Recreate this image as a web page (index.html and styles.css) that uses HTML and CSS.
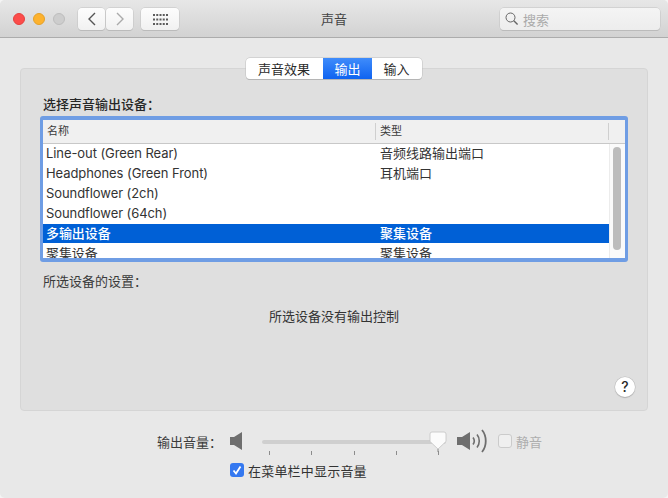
FILE: index.html
```html
<!DOCTYPE html>
<html lang="zh">
<head>
<meta charset="utf-8">
<title>声音</title>
<link rel="stylesheet" href="styles.css">
</head>
<body>
<div class="window">
  <header class="titlebar">
    <div class="tb-left">
      <div class="lights">
        <span class="light red"></span>
        <span class="light yellow"></span>
        <span class="light grey"></span>
      </div>
      <div class="nav">
        <button class="tb-btn nav-btn">
          <svg width="10" height="16" viewBox="0 0 10 16"><path d="M8 2 2 8l6 6" fill="none" stroke="#555" stroke-width="1.4"/></svg>
        </button>
        <button class="tb-btn nav-btn">
          <svg width="10" height="16" viewBox="0 0 10 16"><path d="M2 2 8 8l-6 6" fill="none" stroke="#aaa" stroke-width="1.4"/></svg>
        </button>
      </div>
      <button class="tb-btn grid-btn">
        <svg width="15" height="11" viewBox="0 0 15 11" fill="#5c5c5c">
          <rect x="0" y="0" width="2" height="2"/><rect x="3.25" y="0" width="2" height="2"/><rect x="6.5" y="0" width="2" height="2"/><rect x="9.75" y="0" width="2" height="2"/><rect x="13" y="0" width="2" height="2"/>
          <rect x="0" y="4.5" width="2" height="2"/><rect x="3.25" y="4.5" width="2" height="2"/><rect x="6.5" y="4.5" width="2" height="2"/><rect x="9.75" y="4.5" width="2" height="2"/><rect x="13" y="4.5" width="2" height="2"/>
          <rect x="0" y="9" width="2" height="2"/><rect x="3.25" y="9" width="2" height="2"/><rect x="6.5" y="9" width="2" height="2"/><rect x="9.75" y="9" width="2" height="2"/><rect x="13" y="9" width="2" height="2"/>
        </svg>
      </button>
    </div>
    <div class="title">声音</div>
    <div class="tb-right">
      <div class="search">
        <svg width="14" height="14" viewBox="0 0 14 14"><circle cx="5.5" cy="5.5" r="4.5" fill="none" stroke="#666" stroke-width="1"/><path d="M8.8 8.8 12.6 12.6" stroke="#666" stroke-width="1.4"/></svg>
        <span>搜索</span>
      </div>
    </div>
  </header>

  <main class="content">
    <div class="tabs">
      <div class="tab tab-a">声音效果</div>
      <div class="tab tab-b active">输出</div>
      <div class="tab tab-c">输入</div>
    </div>
    <section class="panel">
      <div class="section-label strong">选择声音输出设备：</div>
      <div class="table-ring">
        <div class="table">
          <div class="thead">
            <div class="th th-name">名称</div>
            <div class="th th-type">类型</div>
            <div class="th th-end"></div>
          </div>
          <div class="tbody">
            <div class="rows">
              <div class="row"><span class="c-name">Line-out (Green Rear)</span><span class="c-type">音频线路输出端口</span></div>
              <div class="row"><span class="c-name">Headphones (Green Front)</span><span class="c-type">耳机端口</span></div>
              <div class="row"><span class="c-name">Soundflower (2ch)</span><span class="c-type"></span></div>
              <div class="row"><span class="c-name">Soundflower (64ch)</span><span class="c-type"></span></div>
              <div class="row selected"><span class="c-name">多输出设备</span><span class="c-type">聚集设备</span></div>
              <div class="row last"><span class="c-name">聚集设备</span><span class="c-type">聚集设备</span></div>
            </div>
            <div class="scrollbar"><div class="thumb"></div></div>
          </div>
        </div>
      </div>
      <div class="section-label settings">所选设备的设置：</div>
      <div class="no-controls">所选设备没有输出控制</div>
      <div class="help-row"><button class="help">?</button></div>
    </section>

    <div class="volume-row">
      <span class="vol-label">输出音量：</span>
      <svg class="spk-low" width="12" height="18" viewBox="0 0 12 18"><path d="M0 5h4l8-5v18l-8-5H0z" fill="#6e6e6e"/></svg>
      <div class="slider">
        <div class="track"></div>
        <div class="ticks"><i></i><i></i><i></i><i></i><i></i></div>
        <svg class="knob" width="18" height="22" viewBox="0 0 18 22"><path d="M3 1h12a2 2 0 0 1 2 2v7.500L9 18 1 10.500V3a2 2 0 0 1 2-2z" fill="#fbfbfb" stroke="#c4c4c4" stroke-width=".8"/><path d="M9 18v3" stroke="#888" stroke-width="1"/></svg>
      </div>
      <svg class="spk-high" width="32" height="24" viewBox="0 0 32 24"><path d="M0 8h5l8-5v18l-8-5H0z" fill="#6e6e6e"/><g fill="none" stroke="#6e6e6e" stroke-width="1.600"><path d="M16 8.500c1.500 2 1.500 5 0 7"/><path d="M20 5.500c3 3.500 3 9.500 0 13"/><path d="M25 1c5 6 5 16 0 22" stroke-width="1.800"/></g></svg>
      <span class="check off"></span>
      <span class="mute">静音</span>
    </div>
    <div class="menubar-row">
      <span class="check on"><svg width="12" height="12" viewBox="0 0 12 12"><path d="M2.500 6.500 5 9.500 9.500 2.500" fill="none" stroke="#fff" stroke-width="1.800"/></svg></span>
      <span class="menubar-text">在菜单栏中显示音量</span>
    </div>
  </main>
</div>
</body>
</html>
```
FILE: styles.css
```css
* { box-sizing: border-box; }
html, body { margin: 0; padding: 0; }
body {
  width: 668px;
  height: 498px;
  overflow: hidden;
  background: #f4f4f4;
  font-family: Inter, "Noto Sans CJK SC", sans-serif;
  font-size: 13px;
  color: #2e2e2e;
}
button { font: inherit; padding: 0; margin: 0; }
.window {
  width: 668px;
  height: 498px;
  display: flex;
  flex-direction: column;
  background: #e8e8e8;
  border-radius: 5px;
  overflow: hidden;
}

.titlebar {
  height: 38px;
  flex: none;
  display: grid;
  grid-template-columns: 1fr auto 1fr;
  align-items: center;
  background: linear-gradient(#e7e7e7, #d2d2d2);
  border-bottom: 1px solid #acacac;
  padding-top: 1px;
}
.tb-left { display: flex; align-items: center; height: 22px; padding-left: 13px; }
.lights { display: flex; gap: 8px; margin-right: 13px; }
.light { width: 12px; height: 12px; border-radius: 50%; }
.red { background: #fc4c4a; border: 1px solid #e5413e; }
.yellow { background: #fdb22e; border: 1px solid #e4a129; }
.grey { background: #cdcdcd; border: 1px solid #bdbdbd; }
.nav { display: flex; gap: 1px; margin-right: 8px; }
.tb-btn {
  height: 22px;
  background: linear-gradient(#fdfdfd, #f1f1f1);
  border: none;
  border-radius: 4px;
  box-shadow: 0 0 0 .5px #c2c2c2, 0 1px 0 #b5b5b5;
  display: flex;
  align-items: center;
  justify-content: center;
}
.nav-btn { width: 27px; }
.grid-btn { width: 38px; }
.title { font-size: 13px; color: #444; margin-bottom: 2px; }
.tb-right { display: flex; justify-content: flex-end; padding-right: 8px; }
.search {
  width: 160px;
  height: 22px;
  background: linear-gradient(#f4f4f4, #ededed);
  border-radius: 4px;
  box-shadow: 0 0 0 .5px #c2c2c2, 0 1px 0 #b5b5b5;
  display: flex;
  align-items: center;
  gap: 4px;
  padding-left: 5px;
  color: #aaa;
  font-size: 13px;
}

.content { flex: 1; padding: 20px 20px 0; display: flex; flex-direction: column; }
.tabs {
  position: relative;
  z-index: 1;
  display: flex;
  height: 21px;
  margin: 0 0 -11px 226px;
  width: 176px;
  background: #fff;
  border-radius: 4px;
  box-shadow: 0 0 0 .5px #bdbdbd, 0 1px 0 #adadad;
  overflow: hidden;
}
.tab { display: flex; align-items: center; justify-content: center; color: #2b2b2b; }
.tab-a { width: 77px; padding-right: 1px; }
.tab-b { width: 49px; }
.tab-c { width: 50px; padding-right: 1px; }
.active { background: linear-gradient(#3f8cfb, #0f63f0); color: #fff; }

.panel {
  width: 628px;
  height: 343px;
  flex: none;
  background: #dfdfdf;
  border: 1px solid #d5d5d5;
  border-radius: 4px;
  padding: 26px 19px 0 19px;
  display: flex;
  flex-direction: column;
}
.section-label { height: 18px; line-height: 18px; margin-left: 3px; }
.strong { font-weight: 500; color: #262626; }
.table-ring {
  margin-top: 3px;
  width: 588px;
  height: 146px;
  padding: 4px 3px;
  border-radius: 3px;
  background: #6f9de4;
}
.table { width: 582px; height: 138px; background: #fff; display: flex; flex-direction: column; overflow: hidden; }
.thead {
  flex: none;
  height: 24px;
  display: flex;
  background: #f0f0f0;
  border-bottom: 1px solid #c8c8c8;
  font-size: 11px;
  color: #3a3a3a;
  padding-top: 3px;
}
.th { height: 17px; line-height: 17px; padding-left: 4px; }
.th-name { width: 332px; }
.th-type { width: 233px; border-left: 1px solid #cfcfcf; padding-left: 4px; }
.th-end { flex: 1; border-left: 1px solid #cfcfcf; }
.tbody { flex: 1; display: flex; min-height: 0; }
.rows { width: 566px; flex: none; overflow: hidden; }
.row { display: flex; height: 20px; line-height: 18px; padding-left: 3px; white-space: nowrap; color: #333; letter-spacing: -.08px; }
.row.selected { height: 19px; background: #0060d6; color: #fff; font-weight: 500; }
.row.last { line-height: 20px; }
.c-name { width: 334px; flex: none; }
.c-type { flex: 1; letter-spacing: 0; }
.scrollbar { flex: 1; background: #fafafa; border-left: 1px solid #ececec; padding: 3px; }
.thumb { width: 8px; height: 103px; border-radius: 4px; background: #bcbcbc; }

.settings { margin-top: 10px; color: #3a3a3a; }
.no-controls { margin-top: 17px; height: 18px; line-height: 18px; text-align: center; color: #333; }
.help-row { flex: 1; display: flex; justify-content: flex-end; padding: 52px 0 0 0; margin-right: -7px; }
.help {
  width: 20px;
  height: 20px;
  border: none;
  border-radius: 50%;
  background: #fff;
  box-shadow: 0 0 0 .5px #bbb, 0 1px 1px #aaa;
  font-weight: 500;
  font-size: 14px;
  color: #2a2a2a;
  line-height: 20px;
}

.volume-row { display: flex; align-items: center; height: 30px; margin-top: 15px; padding-left: 137px; }
.vol-label { width: 72px; white-space: nowrap; color: #3a3a3a; }
.spk-low { margin-left: 1px; }
.slider { position: relative; width: 190px; height: 30px; margin-left: 20px; }
.track { position: absolute; left: 0; right: 6px; top: 14px; height: 4px; border-radius: 2px; background: #cfcfcf; }
.ticks { position: absolute; left: 7px; top: 25px; width: 170px; display: flex; justify-content: space-between; }
.ticks i { display: block; width: 1px; height: 4px; background: #8c8c8c; }
.knob { position: absolute; left: 167px; top: 5px; }
.spk-high { margin-left: 5px; flex: none; }
.check { width: 14px; height: 14px; border-radius: 3px; flex: none; display: flex; align-items: center; justify-content: center; }
.check.off { background: #efefef; border: 1px solid #cbcbcb; margin-left: 9px; }
.mute { color: #aeaeae; margin-left: 4px; }
.menubar-row { display: flex; align-items: center; gap: 4px; height: 18px; padding-left: 210px; margin-top: 5px; color: #333; }
.menubar-text { letter-spacing: .2px; }
.check.on { background: #3478f0; }
```
